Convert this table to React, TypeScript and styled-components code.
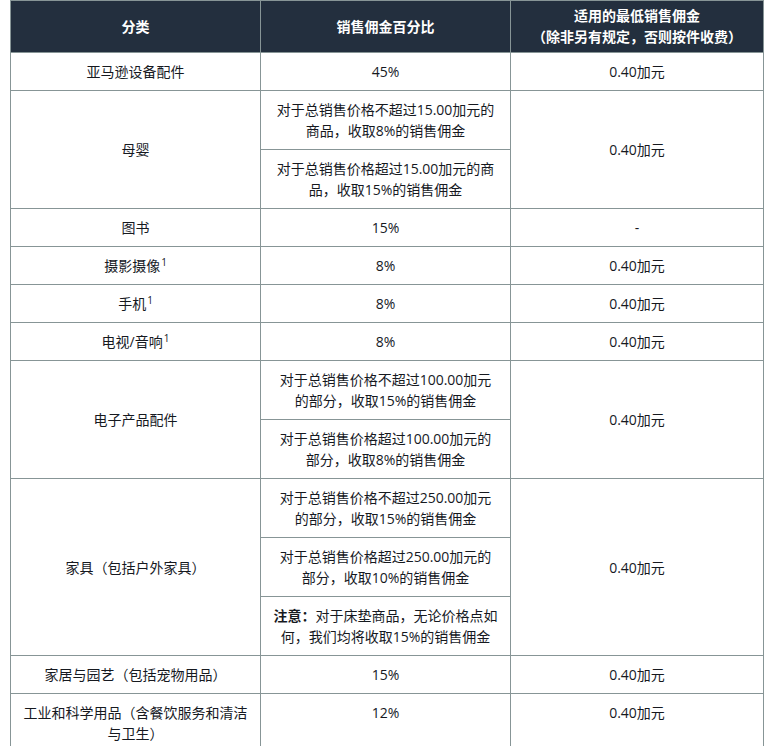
import React from "react";
import styled, { createGlobalStyle } from "styled-components";

const GlobalStyle = createGlobalStyle`
  html, body {
    margin: 0;
    padding: 0;
    background: #ffffff;
  }
  body {
    font-family: "Open Sans", "Noto Sans CJK SC", sans-serif;
    font-size: 14px;
    color: #16191f;
  }
`;

const Page = styled.div`
  padding: 0 0 0 10px;
`;

const Table = styled.table`
  border-collapse: collapse;
  table-layout: fixed;
  width: 753px;
`;

const HeadCell = styled.th`
  background: #232f3e;
  color: #ffffff;
  font-weight: 700;
  font-size: 14px;
  line-height: 21px;
  text-align: center;
  vertical-align: middle;
  border: 1px solid #879596;
  padding: 4px 10px 5px;
  height: 42px;
`;

const Cell = styled.td<{ $middle?: boolean }>`
  border: 1px solid #879596;
  padding: 8px 10px;
  line-height: 21px;
  text-align: center;
  vertical-align: ${(p) => (p.$middle ? "middle" : "top")};
  font-size: 14px;
  color: #16191f;
`;

const Note = styled.strong`
  font-weight: 700;
`;

const Sup = styled.sup`
  font-size: 10px;
  line-height: 0;
  vertical-align: 5px;
  margin-left: 1px;
`;

const MIN = "0.40加元";

export default function App() {
  return (
    <>
      <GlobalStyle />
      <Page>
        <Table>
          <colgroup>
            <col style={{ width: 250 }} />
            <col style={{ width: 250 }} />
            <col style={{ width: 253 }} />
          </colgroup>
          <thead>
            <tr>
              <HeadCell>分类</HeadCell>
              <HeadCell>销售佣金百分比</HeadCell>
              <HeadCell>
                适用的最低销售佣金
                <br />
                （除非另有规定，否则按件收费）
              </HeadCell>
            </tr>
          </thead>
          <tbody>
            <tr>
              <Cell>亚马逊设备配件</Cell>
              <Cell>45%</Cell>
              <Cell>{MIN}</Cell>
            </tr>
            <tr>
              <Cell rowSpan={2} $middle>
                母婴
              </Cell>
              <Cell>
                对于总销售价格不超过15.00加元的
                <br />
                商品，收取8%的销售佣金
              </Cell>
              <Cell rowSpan={2} $middle>
                {MIN}
              </Cell>
            </tr>
            <tr>
              <Cell>
                对于总销售价格超过15.00加元的商
                <br />
                品，收取15%的销售佣金
              </Cell>
            </tr>
            <tr>
              <Cell>图书</Cell>
              <Cell>15%</Cell>
              <Cell>-</Cell>
            </tr>
            <tr>
              <Cell>
                摄影摄像<Sup>1</Sup>
              </Cell>
              <Cell>8%</Cell>
              <Cell>{MIN}</Cell>
            </tr>
            <tr>
              <Cell>
                手机<Sup>1</Sup>
              </Cell>
              <Cell>8%</Cell>
              <Cell>{MIN}</Cell>
            </tr>
            <tr>
              <Cell>
                电视/音响<Sup>1</Sup>
              </Cell>
              <Cell>8%</Cell>
              <Cell>{MIN}</Cell>
            </tr>
            <tr>
              <Cell rowSpan={2} $middle>
                电子产品配件
              </Cell>
              <Cell>
                对于总销售价格不超过100.00加元
                <br />
                的部分，收取15%的销售佣金
              </Cell>
              <Cell rowSpan={2} $middle>
                {MIN}
              </Cell>
            </tr>
            <tr>
              <Cell>
                对于总销售价格超过100.00加元的
                <br />
                部分，收取8%的销售佣金
              </Cell>
            </tr>
            <tr>
              <Cell rowSpan={3} $middle>
                家具（包括户外家具）
              </Cell>
              <Cell>
                对于总销售价格不超过250.00加元
                <br />
                的部分，收取15%的销售佣金
              </Cell>
              <Cell rowSpan={3} $middle>
                {MIN}
              </Cell>
            </tr>
            <tr>
              <Cell>
                对于总销售价格超过250.00加元的
                <br />
                部分，收取10%的销售佣金
              </Cell>
            </tr>
            <tr>
              <Cell>
                <Note>注意：</Note>对于床垫商品，无论价格点如
                <br />
                何，我们均将收取15%的销售佣金
              </Cell>
            </tr>
            <tr>
              <Cell>家居与园艺（包括宠物用品）</Cell>
              <Cell>15%</Cell>
              <Cell>{MIN}</Cell>
            </tr>
            <tr>
              <Cell>
                工业和科学用品（含餐饮服务和清洁
                <br />
                与卫生）
              </Cell>
              <Cell>12%</Cell>
              <Cell>{MIN}</Cell>
            </tr>
          </tbody>
        </Table>
      </Page>
    </>
  );
}
